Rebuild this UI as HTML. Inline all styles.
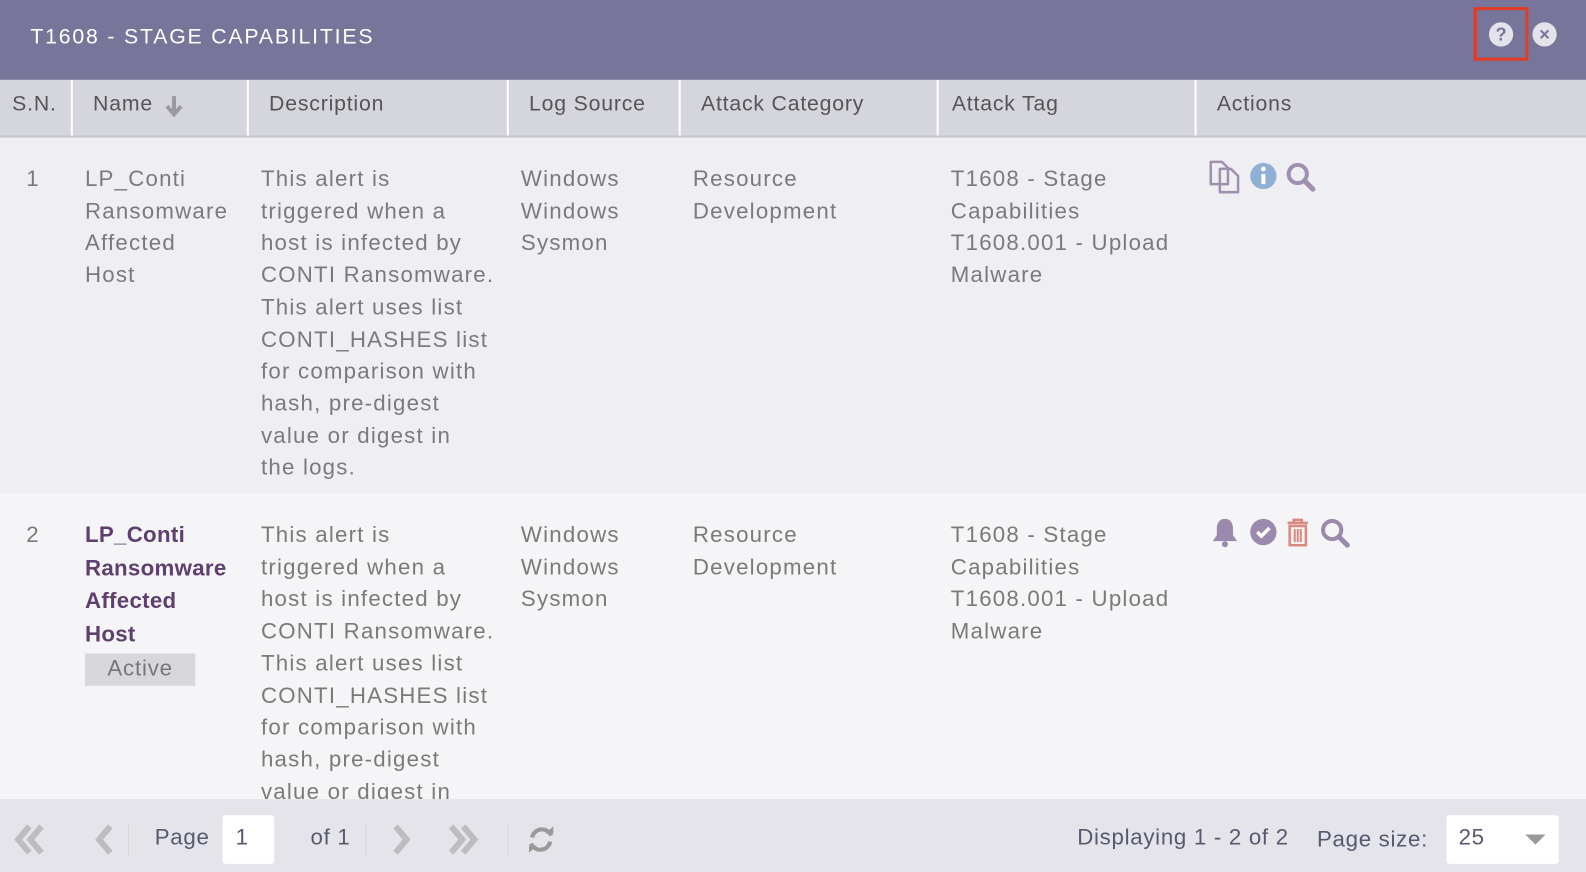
<!DOCTYPE html>
<html><head><meta charset="utf-8"><style>
*{margin:0;padding:0;box-sizing:border-box}
html,body{width:1586px;height:872px;overflow:hidden}
body{font-family:"Liberation Sans",sans-serif;background:#f5f5f7;position:relative;color:#7a7a7a}
#w{position:absolute;left:0;top:0;width:1568px;height:862px;transform:scale(1.0115);transform-origin:0 0}
.top{position:absolute;left:0;top:0;width:1568px;height:79px;background:#77769a}
.title{position:absolute;left:30px;top:25px;color:#fff;font-size:21px;letter-spacing:1.8px}
.hdr{position:absolute;left:0;top:79px;width:1568px;height:57px;background:#d5d5dd;border-bottom:2px solid #c4c4c8}
.hdr div{position:absolute;top:12px;font-size:21px;color:#555;letter-spacing:0.8px}
.sep{position:absolute;top:79px;width:2px;height:55px;background:#fff}
.r1{position:absolute;left:0;top:136px;width:1568px;height:352px;background:#efeef3}
.r2{position:absolute;left:0;top:488px;width:1568px;height:302px;background:#f5f5f7}
.c{position:absolute;font-size:22px;line-height:31.7px;color:#7a7a7a;letter-spacing:1.2px;white-space:nowrap}
.foot{position:absolute;left:0;top:790px;width:1568px;height:82px;background:#e4e4ea}
.f{position:absolute;font-size:22px;color:#555a6e;letter-spacing:0.7px}
.box{position:absolute;background:#fff;border-radius:3px}
</style></head><body><div id="w">
<div class="top"><div class="title">T1608 - STAGE CAPABILITIES</div>
<div style="position:absolute;left:1457px;top:7px;width:54px;height:53px;border:3px solid #e33b26"></div>
<div style="position:absolute;left:1472px;top:22px;width:24px;height:24px;border-radius:50%;background:#e4e3ec;color:#77769a;font-weight:bold;font-size:18px;text-align:center;line-height:24px">?</div>
<div style="position:absolute;left:1515px;top:22px;width:24px;height:24px;border-radius:50%;background:#e4e3ec;color:#77769a;font-weight:bold;font-size:18px;text-align:center;line-height:24px">×</div>
</div>
<div class="hdr">
<div style="left:12px">S.N.</div><div style="left:92px">Name</div><div style="left:266px">Description</div><div style="left:523px">Log Source</div><div style="left:693px">Attack Category</div><div style="left:941px">Attack Tag</div><div style="left:1203px">Actions</div>
</div>
<svg style="position:absolute;left:162px;top:94px" width="20" height="24"><path d="M10 1v16M3 11l7 8 7-8" fill="none" stroke="#9a9a9e" stroke-width="4"/></svg>
<div class="sep" style="left:70px"></div><div class="sep" style="left:244px"></div><div class="sep" style="left:501px"></div><div class="sep" style="left:671px"></div><div class="sep" style="left:926px"></div><div class="sep" style="left:1181px"></div>
<div class="r1"></div><div class="r2"></div>
<div class="c" style="left:26px;top:161px">1</div>
<div class="c" style="left:84px;top:161px">LP_Conti<br>Ransomware<br>Affected<br>Host</div>
<div class="c" style="left:258px;top:161px">This alert is<br>triggered when a<br>host is infected by<br>CONTI Ransomware.<br>This alert uses list<br>CONTI_HASHES list<br>for comparison with<br>hash, pre-digest<br>value or digest in<br>the logs.</div>
<div class="c" style="left:515px;top:161px">Windows<br>Windows<br>Sysmon</div>
<div class="c" style="left:685px;top:161px">Resource<br>Development</div>
<div class="c" style="left:940px;top:161px">T1608 - Stage<br>Capabilities<br>T1608.001 - Upload<br>Malware</div>
<svg style="position:absolute;left:1195px;top:158px" width="110" height="34">
<path d="M2 2h11l6 6v16h-17z M11 9h11l7 7v16h-18z" fill="none" stroke="#a090b0" stroke-width="2.5" stroke-linejoin="round"/>
<circle cx="54" cy="16" r="13" fill="#8fb0d3"/><rect x="52" y="14" width="4" height="10" fill="#fff"/><circle cx="54" cy="9" r="2.3" fill="#fff"/>
<circle cx="88" cy="14" r="9" fill="none" stroke="#a090b0" stroke-width="4"/><path d="M95 21l8 8" stroke="#a090b0" stroke-width="5" stroke-linecap="round"/>
</svg>
<div class="c" style="left:26px;top:513px">2</div>
<div class="c" style="left:84px;top:513px;color:#5e3f6e;font-weight:bold;line-height:32.5px;letter-spacing:0.3px">LP_Conti<br>Ransomware<br>Affected<br>Host</div>
<div style="position:absolute;left:84px;top:646px;width:109px;height:32px;background:#d8d8dc;color:#777;font-size:22px;text-align:center;line-height:30px;letter-spacing:0.8px">Active</div>
<div class="c" style="left:258px;top:513px">This alert is<br>triggered when a<br>host is infected by<br>CONTI Ransomware.<br>This alert uses list<br>CONTI_HASHES list<br>for comparison with<br>hash, pre-digest<br>value or digest in</div>
<div class="c" style="left:515px;top:513px">Windows<br>Windows<br>Sysmon</div>
<div class="c" style="left:685px;top:513px">Resource<br>Development</div>
<div class="c" style="left:940px;top:513px">T1608 - Stage<br>Capabilities<br>T1608.001 - Upload<br>Malware</div>
<svg style="position:absolute;left:1193px;top:510px" width="150" height="34">
<path d="M18 3c-6 0-8 5-8 10v6l-4 6h24l-4-6v-6c0-5-2-10-8-10z" fill="#9b8aab"/><circle cx="18" cy="28" r="3" fill="#9b8aab"/>
<circle cx="56" cy="16" r="13" fill="#9b8aab"/><path d="M50 16l4 4 8-8" fill="none" stroke="#fff" stroke-width="3.5"/>
<path d="M80 7h20M86 7v-3h8v3" fill="none" stroke="#d98a80" stroke-width="2.5"/><rect x="82" y="10" width="16" height="19" fill="none" stroke="#d98a80" stroke-width="2.5"/><path d="M87 13v13M90 13v13M93 13v13" stroke="#d98a80" stroke-width="2"/>
<circle cx="124" cy="14" r="9" fill="none" stroke="#9b8aab" stroke-width="4"/><path d="M131 21l8 8" stroke="#9b8aab" stroke-width="5" stroke-linecap="round"/>
</svg>
<div class="foot"></div>
<svg style="position:absolute;left:12px;top:812px" width="540" height="40">
<path d="M17 5l-11 13 11 13M29 5l-11 13 11 13" fill="none" stroke="#bdbdc0" stroke-width="6"/>
<path d="M97 5l-11 13 11 13" fill="none" stroke="#bdbdc0" stroke-width="6"/>
<line x1="115" y1="4" x2="115" y2="34" stroke="#d5d5d8"/>
<line x1="350" y1="4" x2="350" y2="34" stroke="#d5d5d8"/>
<path d="M379 5l11 13-11 13" fill="none" stroke="#bdbdc0" stroke-width="6"/>
<path d="M434 5l11 13-11 13M446 5l11 13-11 13" fill="none" stroke="#bdbdc0" stroke-width="6"/>
<line x1="490" y1="4" x2="490" y2="34" stroke="#d5d5d8"/>
<path d="M533 14a10 10 0 0 0-19 2M513 22a10 10 0 0 0 19-2" fill="none" stroke="#999" stroke-width="4"/>
<path d="M527 12h8v-7zM519 24h-8v7z" fill="#999"/>
</svg>
<div class="f" style="left:153px;top:815px">Page</div>
<div class="box" style="left:220px;top:806px;width:51px;height:48px"></div>
<div class="f" style="left:233px;top:815px">1</div>
<div class="f" style="left:307px;top:815px">of 1</div>
<div class="f" style="left:1065px;top:815px">Displaying 1 - 2 of 2</div>
<div class="f" style="left:1302px;top:817px">Page size:</div>
<div class="box" style="left:1430px;top:806px;width:111px;height:48px"></div>
<div class="f" style="left:1442px;top:815px">25</div>
<svg style="position:absolute;left:1508px;top:823px" width="22" height="14"><path d="M0 2h20l-10 10z" fill="#999"/></svg>
</div></body></html>
